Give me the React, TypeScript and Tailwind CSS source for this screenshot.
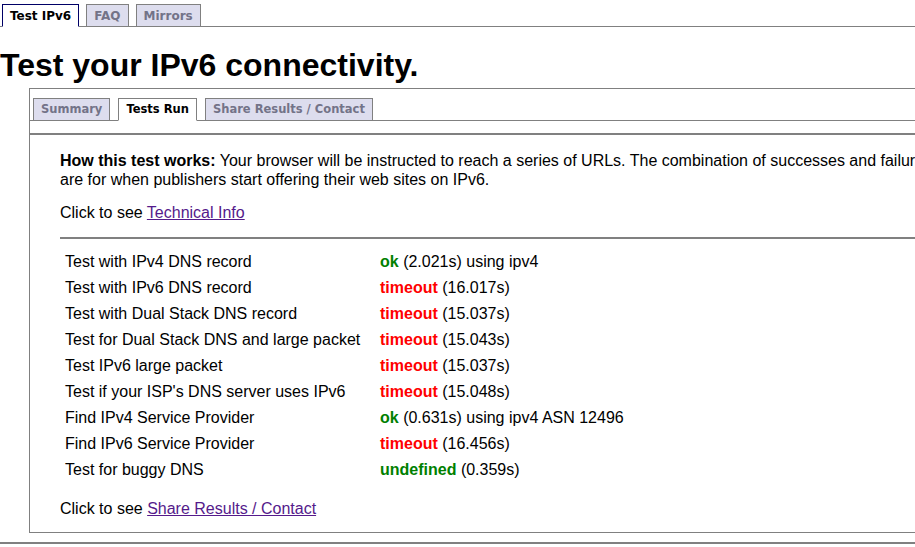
const topTabs = [
  { label: "Test IPv6", active: true },
  { label: "FAQ", active: false },
  { label: "Mirrors", active: false },
];

const innerTabs = [
  { label: "Summary", active: false },
  { label: "Tests Run", active: true },
  { label: "Share Results / Contact", active: false },
];

type Row = { name: string; status: "ok" | "timeout" | "undefined"; detail: string };

const rows: Row[] = [
  { name: "Test with IPv4 DNS record", status: "ok", detail: "(2.021s) using ipv4" },
  { name: "Test with IPv6 DNS record", status: "timeout", detail: "(16.017s)" },
  { name: "Test with Dual Stack DNS record", status: "timeout", detail: "(15.037s)" },
  { name: "Test for Dual Stack DNS and large packet", status: "timeout", detail: "(15.043s)" },
  { name: "Test IPv6 large packet", status: "timeout", detail: "(15.037s)" },
  { name: "Test if your ISP's DNS server uses IPv6", status: "timeout", detail: "(15.048s)" },
  { name: "Find IPv4 Service Provider", status: "ok", detail: "(0.631s) using ipv4 ASN 12496" },
  { name: "Find IPv6 Service Provider", status: "timeout", detail: "(16.456s)" },
  { name: "Test for buggy DNS", status: "undefined", detail: "(0.359s)" },
];

function TopTab({ label, active }: { label: string; active: boolean }) {
  if (active) {
    return (
      <div className="h-[23px] px-[7px] mb-[-1px] flex items-center border border-[#000066] border-b-white bg-white text-black">
        {label}
      </div>
    );
  }
  return (
    <div className="h-[22px] px-[7px] flex items-center border border-[#808080] border-b-0 bg-[#ddddee] text-[#737388]">
      {label}
    </div>
  );
}

function InnerTab({ label, active }: { label: string; active: boolean }) {
  if (active) {
    return (
      <div className="h-[23px] px-[7px] mb-[-1px] flex items-center border border-[#808080] border-b-white bg-white text-black">
        {label}
      </div>
    );
  }
  return (
    <div className="h-[22px] px-[7px] flex items-center border border-[#808080] border-b-0 bg-[#ddddee] text-[#737388]">
      {label}
    </div>
  );
}

export default function App() {
  return (
    <div className="w-[915px] h-[547px] overflow-hidden bg-white text-black font-['Liberation_Sans',Arial,sans-serif]">
      <div className="w-[1100px]">
        {/* TOP TABS */}
        <div className="flex items-end gap-[7px] pt-[4px] pl-[2px] border-b border-[#808080] font-['DejaVu_Sans',Verdana,sans-serif] font-bold text-[12px]">
          {topTabs.map((t) => (
            <TopTab key={t.label} {...t} />
          ))}
        </div>

        <h1 className="mt-[20px] text-[32px] leading-[36px] font-bold">Test your IPv6 connectivity.</h1>

        {/* PANEL */}
        <div className="ml-[29px] mt-[5px] border border-[#808080]">
          <div className="flex items-end gap-[8px] pt-[9px] pl-[3px] border-b border-[#808080] font-['DejaVu_Sans',Verdana,sans-serif] font-bold text-[11.5px]">
            {innerTabs.map((t) => (
              <InnerTab key={t.label} {...t} />
            ))}
          </div>
          <div className="mt-[12px] h-[2px] bg-[#808080]" />

          <div className="pl-[30px] pt-[16px] pb-[14px] text-[16px] leading-[19px]">
            <p>
              <b>How this test works:</b> Your browser will be instructed to reach a series of URLs. The combination of successes and failures tells us how ready you
              <br />
              are for when publishers start offering their web sites on IPv6.
            </p>
            <p className="mt-[14px]">
              Click to see <a href="#" className="text-[#551a8b] underline">Technical Info</a>
            </p>
            <div className="mt-[15px] h-[2px] bg-[#808080]" />

            <div className="mt-[9px]">
              {rows.map((r) => (
                <div key={r.name} className="flex h-[26px] items-center">
                  <div className="w-[320px] pl-[5px]">{r.name}</div>
                  <div>
                    <b className={r.status === "timeout" ? "text-[#ff0000]" : "text-[#008000]"}>{r.status}</b> {r.detail}
                  </div>
                </div>
              ))}
            </div>

            <p className="mt-[17px]">
              Click to see <a href="#" className="text-[#551a8b] underline">Share Results / Contact</a>
            </p>
          </div>
        </div>

        <div className="mt-[9px] h-[2px] bg-[#808080]" />
      </div>
    </div>
  );
}
